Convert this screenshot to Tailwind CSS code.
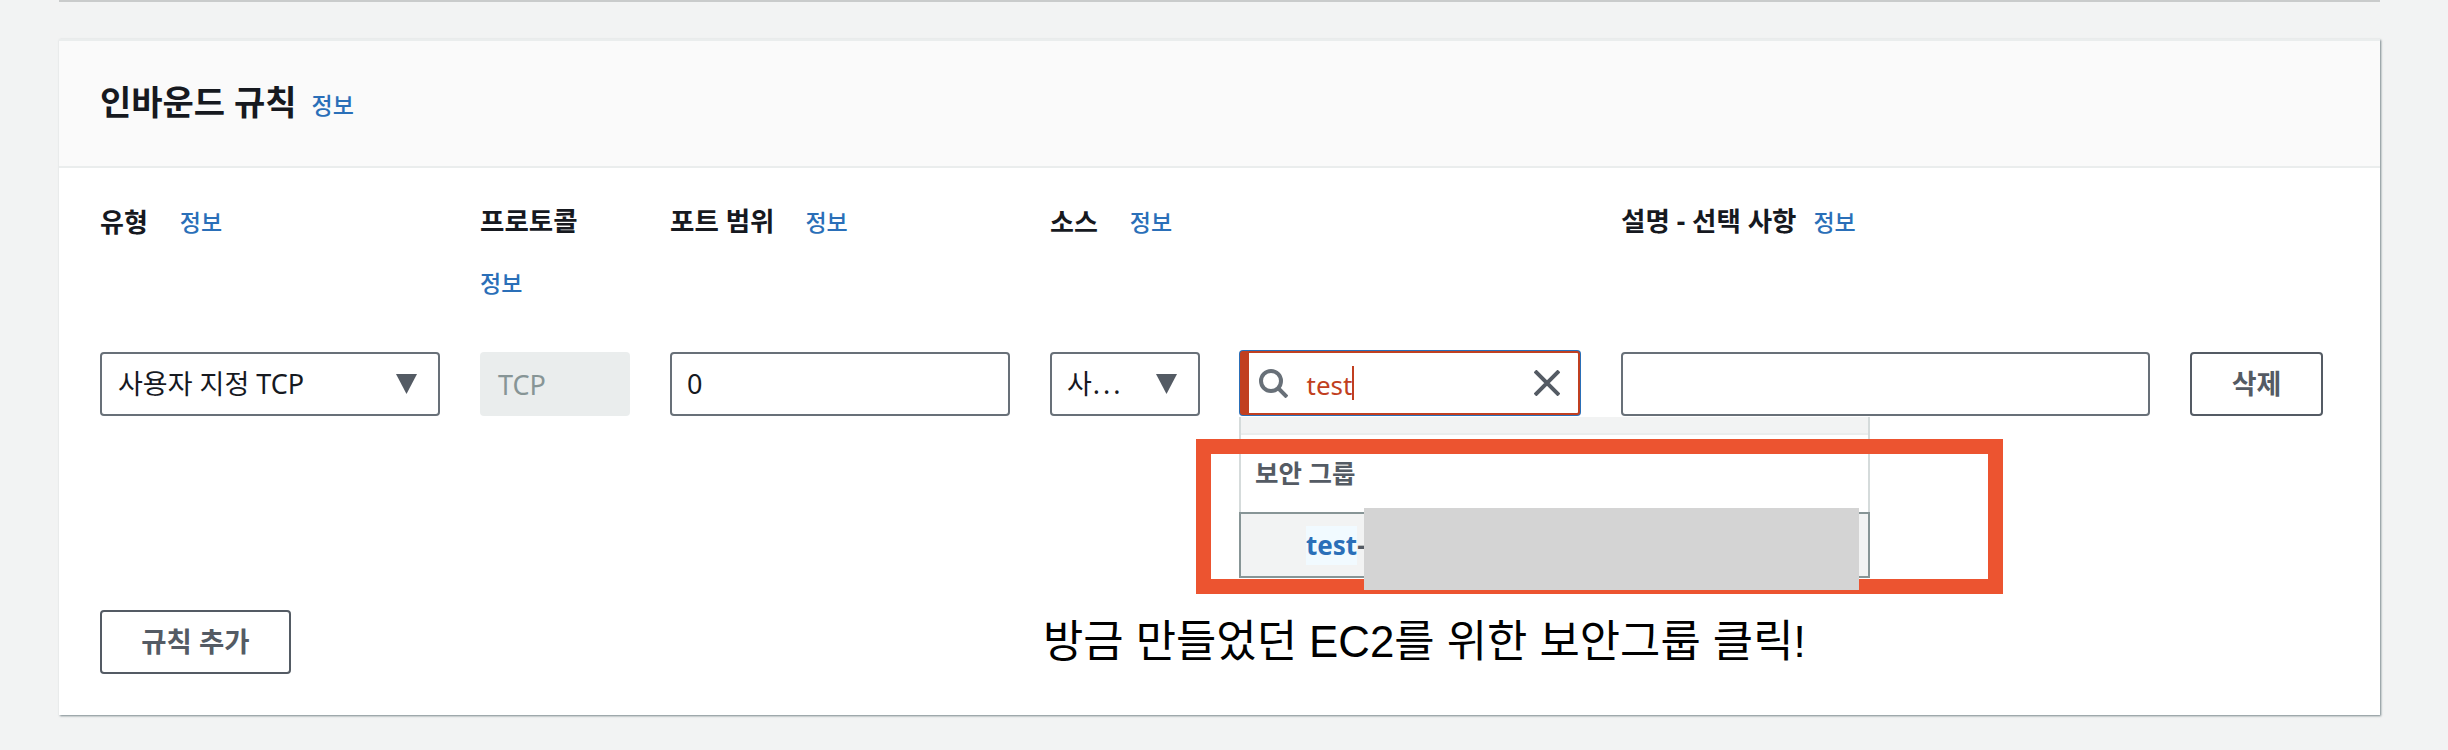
<!DOCTYPE html>
<html lang="ko">
<head>
  <meta charset="UTF-8" />
  <title>인바운드 규칙</title>
  <script src="https://cdn.jsdelivr.net/npm/@tailwindcss/browser@4"></script>
</head>
<body class="bg-[#f2f3f3] h-[750px] overflow-hidden font-['Noto_Sans','Noto_Sans_CJK_KR',sans-serif] text-[#16191f] relative">
  <div class="mx-[59px] w-[2321px]">
    <div class="h-[2px] bg-[#c9cbcb]"></div>

    <!-- Card -->
    <div class="mt-[37px] h-[676px] bg-white border-t-2 border-[#eaeded] shadow-[1px_1px_2px_0px_rgba(0,28,36,0.5)]">
      <div class="h-[127px] bg-[#fafafa] border-b-2 border-[#eaeded] pl-[41px] flex items-center gap-[15px]">
        <h2 class="text-[34px] font-bold leading-none -mt-[3px]">인바운드 규칙</h2>
        <a class="text-[23px] text-[#2a6fb8] font-medium leading-none mt-[3px]">정보</a>
      </div>

      <div class="pt-[36px] pl-[41px] pr-[58px] relative">
        <!-- Column headings -->
        <div class="grid grid-cols-[340px_150px_340px_531px_529px_133px] gap-x-[40px] h-[148px] items-start">
          <div class="flex items-center gap-[32px] h-[36px]"><span class="text-[26px] font-bold">유형</span><a class="text-[23px] text-[#2a6fb8] font-medium">정보</a></div>
          <div>
            <div class="flex items-center h-[36px] text-[26.5px] font-bold">프로토콜</div>
            <a class="block mt-[25px] h-[36px] leading-[36px] text-[23px] text-[#2a6fb8] font-medium">정보</a>
          </div>
          <div class="flex items-center gap-[31px] h-[36px]"><span class="text-[26.5px] font-bold">포트 범위</span><a class="text-[23px] text-[#2a6fb8] font-medium">정보</a></div>
          <div class="flex items-center gap-[32px] h-[36px]"><span class="text-[26px] font-bold">소스</span><a class="text-[23px] text-[#2a6fb8] font-medium">정보</a></div>
          <div class="flex items-center gap-[17px] h-[36px]"><span class="text-[26.5px] font-bold">설명 - 선택 사항</span><a class="text-[23px] text-[#2a6fb8] font-medium">정보</a></div>
        </div>

        <!-- Rule row -->
        <div class="grid grid-cols-[340px_150px_340px_531px_529px_133px] gap-x-[40px] h-[64px] text-[27px]">
          <div class="border-2 border-[#687078] rounded-[4px] flex items-center justify-between pl-[16px] pr-[21px]">
            <span>사용자 지정 TCP</span>
            <svg width="21" height="20" viewBox="0 0 21 20"><path d="M0 0H21L10.5 20Z" fill="#545b64"/></svg>
          </div>
          <div class="bg-[#eaeded] rounded-[4px] flex items-center pl-[18px] pt-[2px] text-[#879596]">TCP</div>
          <div class="border-2 border-[#687078] rounded-[4px] flex items-center pl-[15px]">0</div>
          <div class="flex gap-x-[39px]">
            <div class="w-[150px] border-2 border-[#687078] rounded-[4px] flex items-center justify-between pl-[15px] pr-[21px]">
              <span>사<span class="tracking-[3px] ml-[1px]">...</span></span>
              <svg width="21" height="20" viewBox="0 0 21 20"><path d="M0 0H21L10.5 20Z" fill="#545b64"/></svg>
            </div>
            <div class="w-[344px] h-[66px] -mt-[2px] rounded-[4px] bg-[#2a6fb8] p-px">
              <div class="h-full rounded-[3px] bg-white border-2 border-l-[9px] border-[#c13f20] flex items-center pl-[10px] pr-[18px] text-[#c13f20] text-[26px]">
                <svg width="29" height="29" viewBox="0 0 29 29" fill="none" stroke="#687078" stroke-width="4"><circle cx="12" cy="12" r="10"/><path d="M19 19L28 28"/></svg>
                <span class="ml-[19px] leading-none border-r-2 border-[#c13f20] pt-[6px] pb-[2px]">test</span>
                <svg class="ml-auto" width="26" height="26" viewBox="0 0 26 26" fill="none" stroke="#545b64" stroke-width="4"><path d="M1 1L25 25M25 1L1 25"/></svg>
              </div>
            </div>
          </div>
          <div class="border-2 border-[#687078] rounded-[4px]"></div>
          <button class="border-2 border-[#545b64] rounded-[4px] text-[#545b64] font-bold">삭제</button>
        </div>

        <button class="block mt-[194px] w-[191px] h-[64px] border-2 border-[#545b64] rounded-[4px] text-[27.5px] text-[#545b64] font-bold">규칙 추가</button>
      </div>
    </div>
  </div>

  <!-- Autosuggest dropdown -->
  <div class="absolute left-[1239px] top-[417px] w-[631px] h-[161px] bg-white border-x-2 border-[#d5dbdb] flex flex-col">
    <div class="h-[18px] bg-[#f2f3f3] border-b-2 border-[#eaeded]"></div>
    <div class="h-[77px] pl-[14px] pt-[20px] text-[25.5px] font-bold text-[#545b64] leading-[36px]">보안 그룹</div>
    <div class="-mx-[2px] flex-1 bg-[#f2f3f3] border-2 border-[#879596] pl-[65px] flex items-center text-[26px] font-bold text-[#2a6fb8]"><span class="bg-[#f1faff]">test</span><span class="text-[#545b64]">-</span></div>
  </div>

  <!-- Annotations drawn over the screenshot -->
  <div class="absolute left-[1196px] top-[439px] w-[807px] h-[155px] border-[15px] border-[#ec5430]"></div>
  <div class="absolute left-[1364px] top-[508px] w-[495px] h-[82px] bg-[#d4d4d4]"></div>
  <div class="absolute left-[1043px] top-[616px] text-[43.8px] leading-[52px] text-black whitespace-nowrap font-['Liberation_Sans','Noto_Sans_CJK_KR',sans-serif]">방금 만들었던 EC2를 위한 보안그룹 클릭!</div>
</body>
</html>
